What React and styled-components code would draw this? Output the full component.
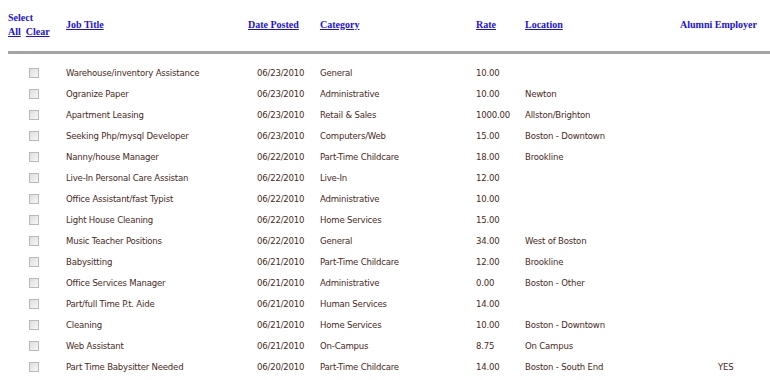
import React from 'react';
import styled, { createGlobalStyle } from 'styled-components';

const jobs = [
  ['Warehouse/inventory Assistance', '06/23/2010', 'General', '10.00', '', ''],
  ['Ogranize Paper', '06/23/2010', 'Administrative', '10.00', 'Newton', ''],
  ['Apartment Leasing', '06/23/2010', 'Retail & Sales', '1000.00', 'Allston/Brighton', ''],
  ['Seeking Php/mysql Developer', '06/23/2010', 'Computers/Web', '15.00', 'Boston - Downtown', ''],
  ['Nanny/house Manager', '06/22/2010', 'Part-Time Childcare', '18.00', 'Brookline', ''],
  ['Live-In Personal Care Assistan', '06/22/2010', 'Live-In', '12.00', '', ''],
  ['Office Assistant/fast Typist', '06/22/2010', 'Administrative', '10.00', '', ''],
  ['Light House Cleaning', '06/22/2010', 'Home Services', '15.00', '', ''],
  ['Music Teacher Positions', '06/22/2010', 'General', '34.00', 'West of Boston', ''],
  ['Babysitting', '06/21/2010', 'Part-Time Childcare', '12.00', 'Brookline', ''],
  ['Office Services Manager', '06/21/2010', 'Administrative', '0.00', 'Boston - Other', ''],
  ['Part/full Time P.t. Aide', '06/21/2010', 'Human Services', '14.00', '', ''],
  ['Cleaning', '06/21/2010', 'Home Services', '10.00', 'Boston - Downtown', ''],
  ['Web Assistant', '06/21/2010', 'On-Campus', '8.75', 'On Campus', ''],
  ['Part Time Babysitter Needed', '06/20/2010', 'Part-Time Childcare', '14.00', 'Boston - South End', 'YES'],
];

const GlobalStyle = createGlobalStyle`
  body {
    margin: 0;
    background: #fff;
  }
`;

const COLS = '58px 182px 72px 156px 49px 155px 90px';

const Page = styled.div`
  padding: 8px 0 0 8px;
  width: 762px;
`;

const HeaderRow = styled.div`
  display: grid;
  grid-template-columns: ${COLS};
  align-items: center;
  height: 33px;
  padding-bottom: 10px;
  border-bottom: 3px solid #a3a3a3;
  font-family: "Liberation Serif", "Times New Roman", serif;
  font-weight: bold;
  font-size: 10px;
  color: #1a10e8;
`;

const SelectCell = styled.div`
  display: flex;
  flex-direction: column;
  line-height: 14px;
  padding-top: 1px;
`;

const SelectLinks = styled.div`
  display: flex;
  gap: 5px;
`;

const HeadLink = styled.a`
  color: #1a10e8;
  text-decoration: underline;
  cursor: pointer;
`;

const HeadText = styled.span`
  white-space: nowrap;
`;

const Body = styled.div`
  padding-top: 8px;
`;

const Row = styled.div`
  display: grid;
  grid-template-columns: ${COLS};
  align-items: center;
  height: 21px;
  font-family: "DejaVu Sans Condensed", "DejaVu Sans", sans-serif;
  font-size: 9.5px;
  letter-spacing: -0.2px;
  color: #4a2a1e;
`;

const Cell = styled.div`
  padding-left: ${(p) => p.$indent || 0}px;
  white-space: nowrap;
`;

const CheckBox = styled.span`
  display: block;
  width: 8px;
  height: 8px;
  margin-left: 21px;
  border: 1px solid #b9b9b9;
  background: linear-gradient(135deg, #dedede, #f6f6f6);
`;

export default function App() {
  return (
    <Page>
      <GlobalStyle />
      <HeaderRow>
        <SelectCell>
          <span>Select</span>
          <SelectLinks>
            <HeadLink>All</HeadLink>
            <HeadLink>Clear</HeadLink>
          </SelectLinks>
        </SelectCell>
        <HeadText><HeadLink>Job Title</HeadLink></HeadText>
        <HeadText><HeadLink>Date Posted</HeadLink></HeadText>
        <HeadText><HeadLink>Category</HeadLink></HeadText>
        <HeadText><HeadLink>Rate</HeadLink></HeadText>
        <HeadText><HeadLink>Location</HeadLink></HeadText>
        <HeadText>Alumni Employer</HeadText>
      </HeaderRow>
      <Body>
        {jobs.map((job) => (
          <Row key={job[0]}>
            <CheckBox />
            <Cell>{job[0]}</Cell>
            <Cell $indent={9}>{job[1]}</Cell>
            <Cell>{job[2]}</Cell>
            <Cell>{job[3]}</Cell>
            <Cell>{job[4]}</Cell>
            <Cell $indent={38}>{job[5]}</Cell>
          </Row>
        ))}
      </Body>
    </Page>
  );
}
